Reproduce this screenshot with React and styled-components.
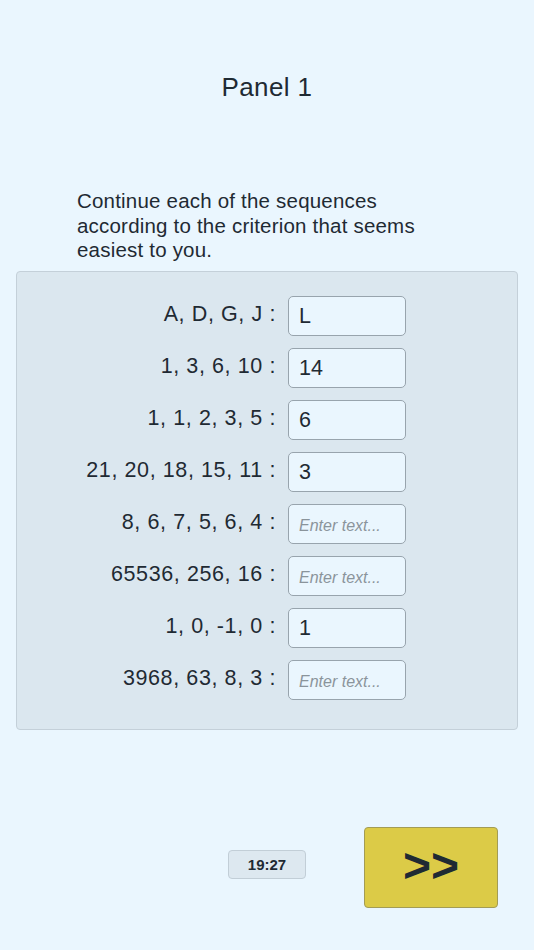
import React from "react";
import styled, { createGlobalStyle } from "styled-components";

const GlobalStyle = createGlobalStyle`
  html, body {
    margin: 0;
    padding: 0;
    background: #eaf6fe;
  }
  body {
    font-family: "Liberation Sans", Arial, sans-serif;
    color: #1f2a33;
  }
`;

const Page = styled.div`
  width: 534px;
  min-height: 950px;
  box-sizing: border-box;
  padding-top: 71px;
`;

const Title = styled.h1`
  margin: 0;
  text-align: center;
  font-size: 26px;
  font-weight: 400;
  letter-spacing: 0.4px;
  line-height: 32px;
`;

const Instructions = styled.p`
  margin: 86px 0 0 77px;
  width: 360px;
  font-size: 20.5px;
  letter-spacing: 0.2px;
  line-height: 24.5px;
`;

const Sheet = styled.div`
  margin: 8px 16px 0 16px;
  background: #dbe7ef;
  border: 1px solid #c4d0d9;
  border-radius: 4px;
  padding: 24px 0 29px 0;
  display: grid;
  grid-template-columns: 259px 118px;
  column-gap: 12px;
  row-gap: 12px;
  align-items: center;
`;

const Label = styled.label`
  text-align: right;
  font-size: 21.5px;
  letter-spacing: 0.6px;
  white-space: nowrap;
  padding-bottom: 3px;
`;

const Field = styled.input`
  box-sizing: border-box;
  width: 118px;
  height: 40px;
  margin: 0;
  padding: 2px 0 0 10px;
  background: #eaf6fe;
  border: 1px solid #98a4ad;
  border-radius: 5px;
  font-family: "Liberation Sans", Arial, sans-serif;
  font-size: 21.5px;
  color: #1f2a33;
  outline: none;

  &::placeholder {
    font-size: 16px;
    font-style: italic;
    color: #8a949b;
  }
`;

const Footer = styled.div`
  margin-top: 97px;
  display: flex;
  align-items: center;
  justify-content: flex-end;
  gap: 58px;
  padding-right: 36px;
`;

const Timer = styled.div`
  box-sizing: border-box;
  width: 78px;
  height: 29px;
  margin-bottom: 6px;
  display: flex;
  align-items: center;
  justify-content: center;
  background: #dde8f0;
  border: 1px solid #c2ced7;
  border-radius: 4px;
  font-size: 15px;
  font-weight: 700;
`;

const NextButton = styled.button`
  box-sizing: border-box;
  width: 134px;
  height: 81px;
  background: #dccb47;
  border: 1px solid #a39c55;
  border-radius: 4px;
  font-family: "Liberation Sans", Arial, sans-serif;
  font-size: 48px;
  font-weight: 700;
  color: #1f2a33;
  padding: 0 0 4px 0;
  cursor: pointer;
`;

const rows = [
  { seq: "A, D, G, J :", value: "L" },
  { seq: "1, 3, 6, 10 :", value: "14" },
  { seq: "1, 1, 2, 3, 5 :", value: "6" },
  { seq: "21, 20, 18, 15, 11 :", value: "3" },
  { seq: "8, 6, 7, 5, 6, 4 :", value: "" },
  { seq: "65536, 256, 16 :", value: "" },
  { seq: "1, 0, -1, 0 :", value: "1" },
  { seq: "3968, 63, 8, 3 :", value: "" },
];

export default function App() {
  return (
    <>
      <GlobalStyle />
      <Page>
        <Title>Panel 1</Title>
        <Instructions>
          Continue each of the sequences according to the criterion that seems
          easiest to you.
        </Instructions>
        <Sheet>
          {rows.map((r, i) => (
            <React.Fragment key={i}>
              <Label htmlFor={"seq" + i}>{r.seq}</Label>
              <Field
                id={"seq" + i}
                defaultValue={r.value}
                placeholder="Enter text..."
              />
            </React.Fragment>
          ))}
        </Sheet>
        <Footer>
          <Timer>19:27</Timer>
          <NextButton>&gt;&gt;</NextButton>
        </Footer>
      </Page>
    </>
  );
}
